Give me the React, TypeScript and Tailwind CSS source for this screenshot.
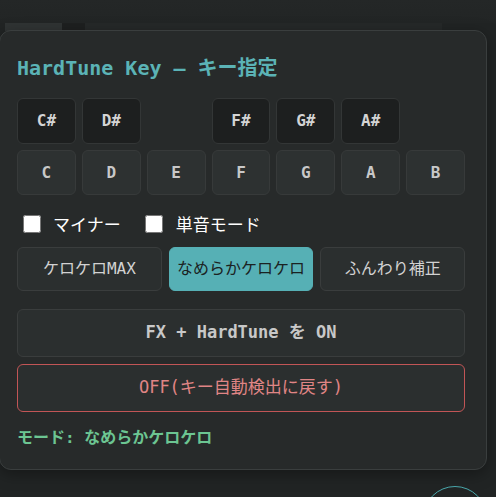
import { useState } from 'react'

const mono = "font-['DejaVu_Sans_Mono','Noto_Sans_CJK_JP',monospace]"

const sharps: (string | null)[] = ['C#', 'D#', null, 'F#', 'G#', 'A#', null]
const naturals = ['C', 'D', 'E', 'F', 'G', 'A', 'B']
const modes = ['ケロケロMAX', 'なめらかケロケロ', 'ふんわり補正']

export default function App() {
  const [mode, setMode] = useState('なめらかケロケロ')

  return (
    <div className={`relative w-[496px] h-[497px] overflow-hidden bg-[#212424] ${mono}`}>
      {/* Background page */}
      <div className="h-[23px] bg-gradient-to-b from-[#242727] to-[#222525]" />
      <div className="flex h-[8px]">
        <div className="ml-[5px] w-[57px] bg-[#303434]" />
        <div className="w-[23px] bg-[#1e2020]" />
        <div className="w-[357px] bg-[#262929]" />
      </div>
      <div className="absolute left-[423px] top-[486px] w-[64px] h-[64px] rounded-full border border-[#4aa9ad]" />

      {/* Key popover */}
      <div className="absolute left-[-1px] top-[30px] w-[488px] h-[440px] rounded-[12px] border border-[#3a3e3e] bg-[#272a2a] pl-[17px] pr-[21px] pt-[23px] shadow-[0_4px_16px_rgba(0,0,0,0.35)]">
        <h2 className="text-[20px] leading-[28px] font-bold text-[#5bb3b6]">HardTune Key — キー指定</h2>

        <div className="mt-[16px] grid grid-cols-7 gap-x-[6px] gap-y-[6px]">
          {sharps.map((k, i) =>
            k ? (
              <button
                key={i}
                className="h-[46px] rounded-[6px] border border-[#333636] bg-[#1d1f1f] text-[16px] font-bold text-[#d4d4d4]"
              >
                {k}
              </button>
            ) : (
              <div key={i} />
            )
          )}
          {naturals.map((k) => (
            <button
              key={k}
              className="h-[45px] rounded-[6px] border border-[#373a3a] bg-[#2d3131] text-[16px] font-bold text-[#c8c8c8]"
            >
              {k}
            </button>
          ))}
        </div>

        <div className="mt-[17px] flex items-center h-[24px] text-[17px] text-white font-['Noto_Sans_CJK_JP',sans-serif]">
          <label className="flex items-center">
            <input type="checkbox" className="ml-[6px] w-[18px] h-[18px]" />
            <span className="ml-[12px]">マイナー</span>
          </label>
          <label className="flex items-center ml-[24px]">
            <input type="checkbox" className="w-[18px] h-[18px]" />
            <span className="ml-[13px]">単音モード</span>
          </label>
        </div>

        <div className="mt-[11px] grid grid-cols-3 gap-[7px]">
          {modes.map((m) => (
            <button
              key={m}
              onClick={() => setMode(m)}
              className={
                m === mode
                  ? 'h-[44px] rounded-[6px] border border-[#56b0b5] bg-[#56b0b5] text-[16px] text-[#1b2222]'
                  : 'h-[44px] rounded-[6px] border border-[#3a3d3d] bg-[#2b2f2f] text-[16px] text-[#d2d2d2]'
              }
            >
              {m}
            </button>
          ))}
        </div>

        <button className="mt-[18px] w-full h-[48px] rounded-[6px] border border-[#3a3d3d] bg-[#2b2f2f] text-[17px] font-bold text-[#c8c8c8]">
          FX + HardTune を ON
        </button>
        <button className="mt-[7px] w-full h-[48px] rounded-[6px] border border-[#c25556] bg-[#2b2f2f] text-[17px] text-[#e08585]">
          OFF(キー自動検出に戻す)
        </button>

        <div className="mt-[14px] leading-[24px] text-[16px] font-bold text-[#6cc592]">モード: なめらかケロケロ</div>
      </div>
    </div>
  )
}
